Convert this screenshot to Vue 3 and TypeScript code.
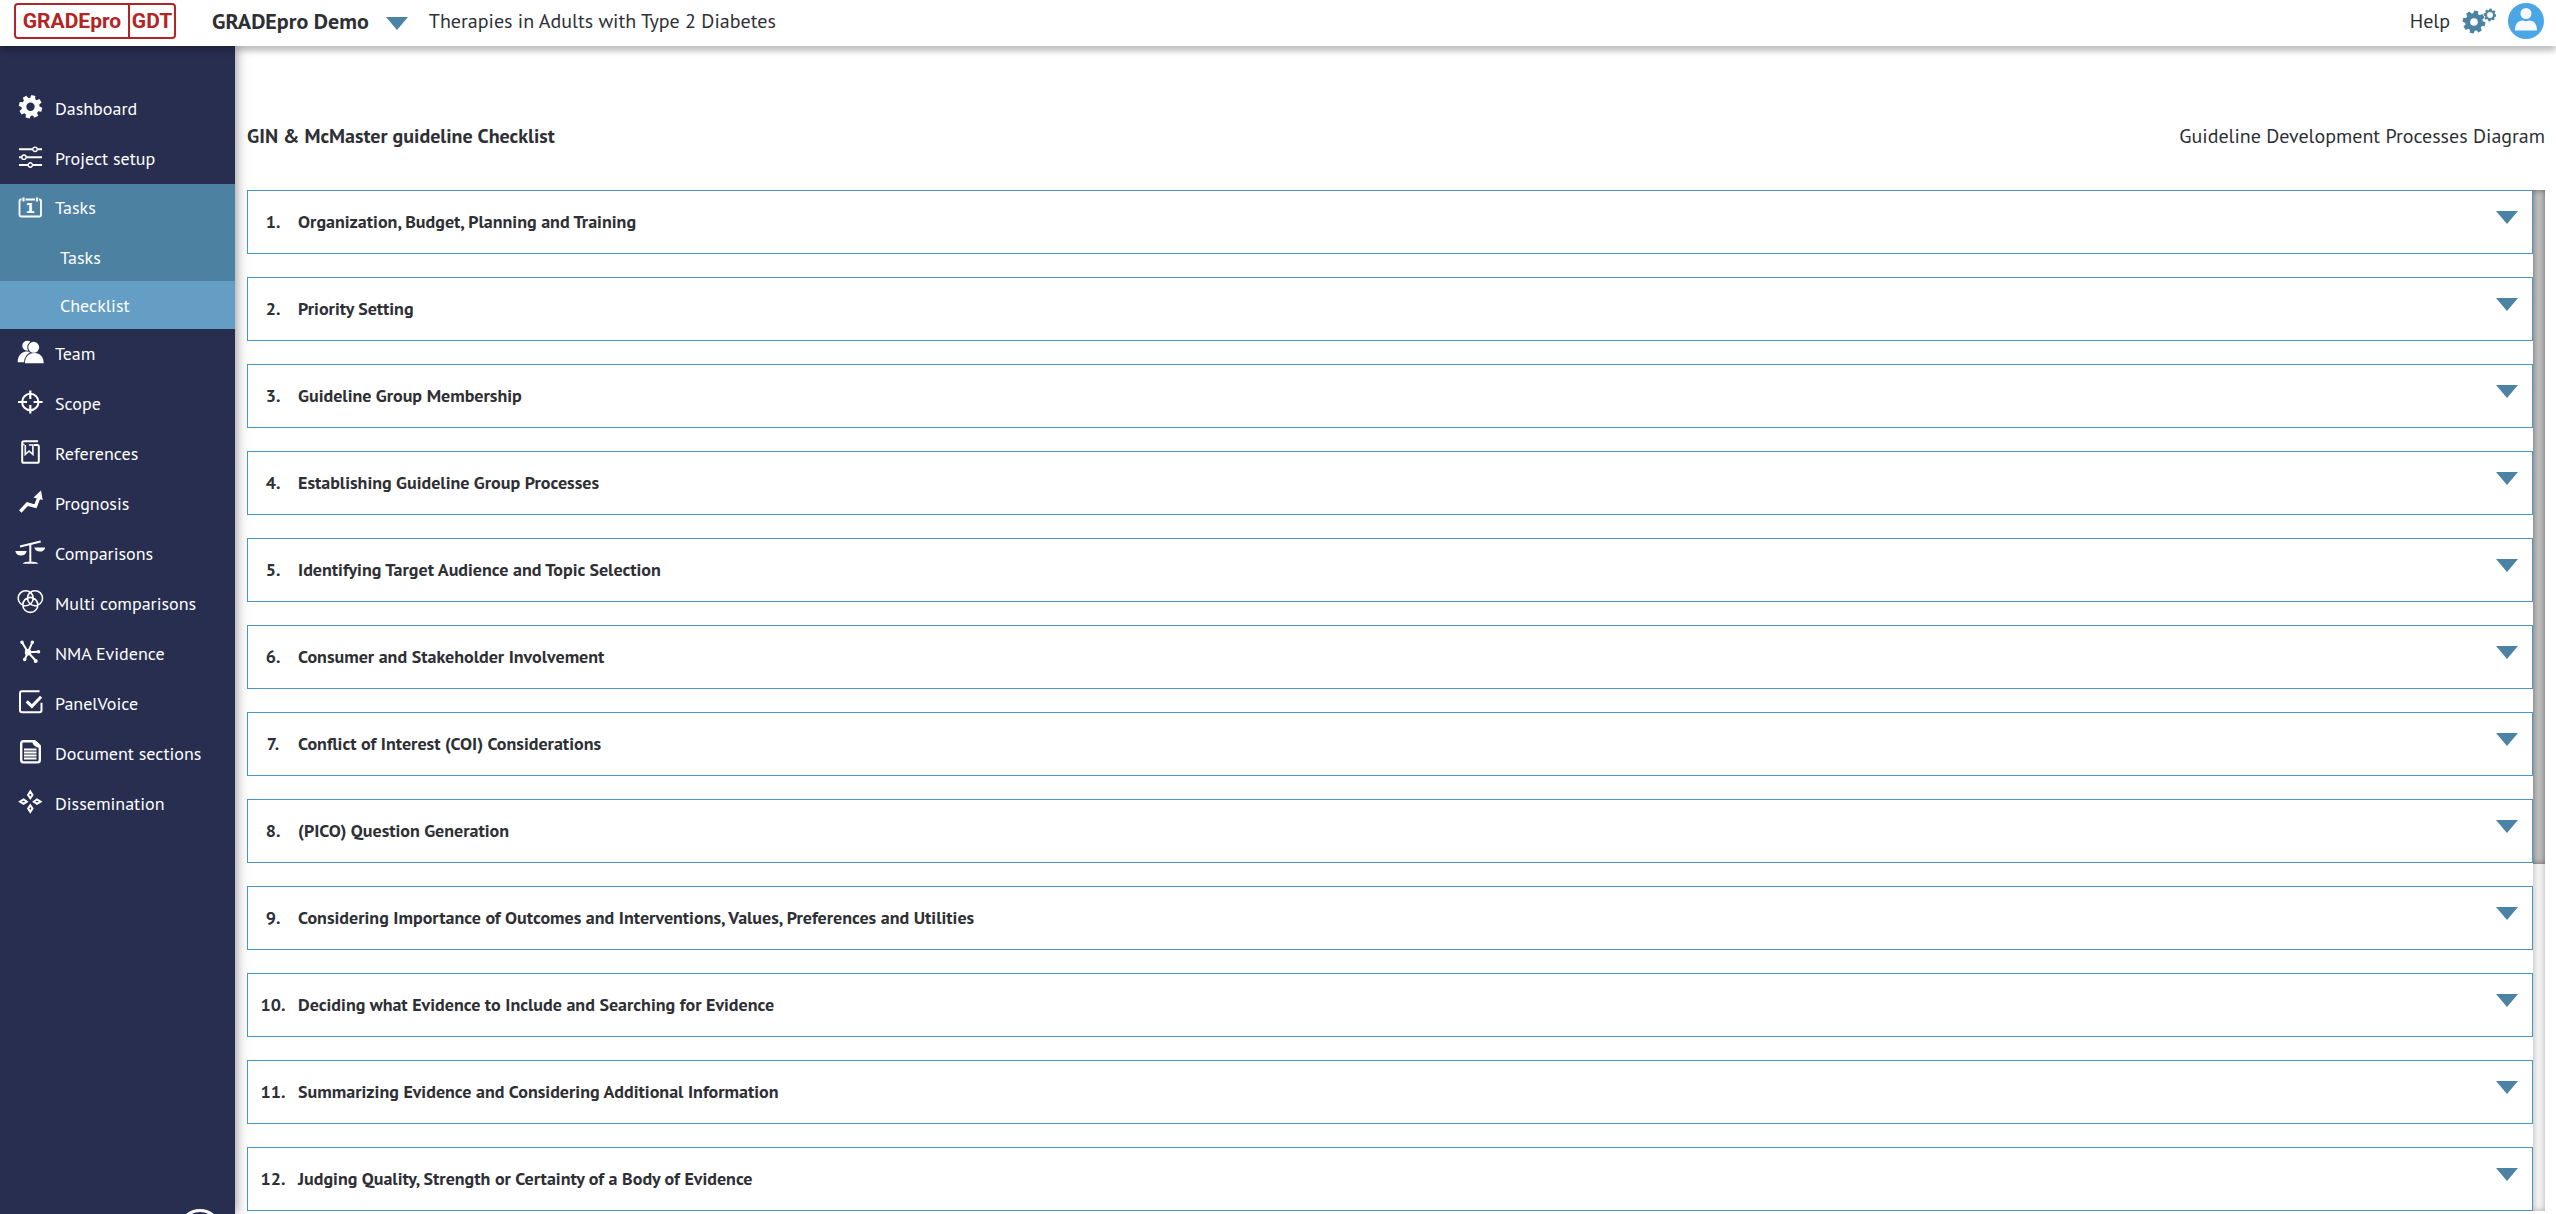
<script setup lang="ts">
import { ref } from 'vue'

interface Shape {
  d: string
  fill?: boolean
  width?: number
  cut?: boolean
}
interface MenuItem {
  label: string
  icon: Shape[]
  glyph?: string
  children?: string[]
}

const circle = (cx: number, cy: number, r: number): string =>
  `M${cx - r} ${cy}a${r} ${r} 0 1 0 ${2 * r} 0a${r} ${r} 0 1 0 ${-2 * r} 0z`

function gear(cx: number, cy: number, outer: number, inner: number, hole: number, turn = 0): string {
  const teeth = 8
  const step = (Math.PI * 2) / teeth
  const at = (r: number, a: number) => `${(cx + r * Math.cos(a)).toFixed(2)} ${(cy + r * Math.sin(a)).toFixed(2)}`
  const points: string[] = []
  for (let i = 0; i < teeth; i++) {
    const a = i * step + turn
    points.push(at(inner, a - step * 0.36), at(outer, a - step * 0.22), at(outer, a + step * 0.22), at(inner, a + step * 0.36))
  }
  return `M${points.join('L')}z${circle(cx, cy, hole)}`
}

const menu: MenuItem[] = [
  { label: 'Dashboard', icon: [{ d: gear(15.5, 12.8, 11.8, 9, 4.2, 0.25), fill: true }] },
  {
    label: 'Project setup',
    icon: [
      { d: 'M4 5.3h14M22.3 5.3h4.7M4 13.2h2.7M11.3 13.2h15.7M4 21h9M17.6 21h9.4', width: 2 },
      { d: circle(20, 5.3, 2.2) + circle(9, 13.2, 2.2) + circle(15.3, 21, 2.2), width: 1.4 },
    ],
  },
  {
    label: 'Tasks',
    glyph: '1',
    icon: [
      { d: 'M6.500 5.500h-.5q-1.500 0-1.500 1.500v14q0 1.500 1.500 1.500h18.500q1.500 0 1.500-1.500v-14q0-1.500-1.500-1.500h-.5M10.500 5.500h9.500', width: 1.8 },
      { d: 'M8.500 3.500v4M22 3.500v4', width: 2.2 },
    ],
    children: ['Tasks', 'Checklist'],
  },
  {
    label: 'Team',
    icon: [
      { d: circle(12.3, 6.8, 5) + 'M2.7 23.2c0-6 3-9.700 8-10.700h5l-5 10.700z', fill: true },
      { d: circle(18.7, 8.3, 5.5) + 'M10 24.300c0-6 3-10.300 9.300-10.300s9.400 4.300 9.400 10.300z', fill: true, cut: true },
    ],
  },
  {
    label: 'Scope',
    icon: [
      { d: circle(15.3, 13, 8.2), width: 2 },
      { d: 'M15.3 1.5v8.500M15.3 16v8.500M3 13h9M18.600 13h9', width: 2.2 },
    ],
  },
  {
    label: 'References',
    icon: [
      { d: 'M23 2.300h-14q-1.800 0-1.800 1.800v18.100q0 1.600 1.600 1.600h13.400q1.600 0 1.600-1.600v-14.600q0-1.600-1.600-1.600h-3.200', width: 2 },
      { d: 'M9.500 5.500h-2M10.300 6v9.500l3.800-3.500 3.800 3.500v-9.500h-4', width: 1.6 },
    ],
  },
  {
    label: 'Prognosis',
    icon: [
      { d: 'M5.300 22.500l7-7.500 8.200 2.300 3.300-8.600', width: 3.4 },
      { d: 'M26 1.500l-7.500 7 9.200 2.500z', fill: true },
    ],
  },
  {
    label: 'Comparisons',
    icon: [
      { d: 'M5 7.500l20.700-5', width: 2.2 },
      { d: 'M15.300 4.500v18.500', width: 2 },
      { d: 'M7.700 24.700q1-2 5-2h5.200q4.400 0 5.400 2zM.3 12h11.400q-1 4.500-5.700 4.500t-5.700-4.500zM19.300 8.500h11q-1 4-5.500 4t-5.500-4z', fill: true },
    ],
  },
  {
    label: 'Multi comparisons',
    icon: [{ d: circle(10.7, 9.2, 7.5) + circle(20, 9.2, 7.5) + circle(15.3, 15.9, 7.5), width: 1.6 }],
  },
  {
    label: 'NMA Evidence',
    icon: [
      { d: 'M13 13.300L7 3.300M13 13.300L17.300 3.300M13 13.300L24 12.700M13 13.300L21 22M13 13.300L9.700 20.500', width: 2 },
      { d: circle(13, 13.3, 3.2), fill: true },
      { d: circle(7, 3.3, 1.8) + circle(17.3, 3.3, 1.8) + circle(23.5, 12.7, 1.8) + circle(20.7, 22, 2) + circle(9.7, 20.5, 1.8), fill: true },
    ],
  },
  {
    label: 'PanelVoice',
    icon: [
      { d: 'M24.500 2.300h-17.500q-2 0-2 2v17q0 2 2 2h17.500q2 0 2-2v-7.500', width: 2 },
      { d: 'M11.700 12.300l5.200 5 9.200-9.500', width: 3 },
    ],
  },
  {
    label: 'Document sections',
    icon: [
      { d: 'M19.500 2.300h-11q-2.300 0-2.300 2.300v16.500q0 2.300 2.300 2.300h14q2.300 0 2.300-2.300v-14z', width: 2.4 },
      { d: 'M17 2q1 6 8 7l-1-4.500-3-2.500z', fill: true },
      { d: 'M9 10.500h12.500M9 13.500h12.500M9 16.500h12.500M9 19.500h12.500', width: 1.8 },
    ],
  },
  {
    label: 'Dissemination',
    icon: [
      { d: 'M15.300 2.500l2.200 3.500-2.200 3.200-2.200-3.200zM15.300 16.200l2.200 3.200-2.200 3.500-2.200-3.500zM5.100 12.700l3.500-2.200 3.200 2.200-3.200 2.200zM25.500 12.700l-3.500-2.200-3.200 2.200 3.200 2.200z', width: 2 },
    ],
  },
]

const sections = ref<string[]>([
  'Organization, Budget, Planning and Training',
  'Priority Setting',
  'Guideline Group Membership',
  'Establishing Guideline Group Processes',
  'Identifying Target Audience and Topic Selection',
  'Consumer and Stakeholder Involvement',
  'Conflict of Interest (COI) Considerations',
  '(PICO) Question Generation',
  'Considering Importance of Outcomes and Interventions, Values, Preferences and Utilities',
  'Deciding what Evidence to Include and Searching for Evidence',
  'Summarizing Evidence and Considering Additional Information',
  'Judging Quality, Strength or Certainty of a Body of Evidence',
])

const current = ref('Checklist')
</script>

<template>
  <div class="app">
    <header class="topbar">
      <a class="logo" href="#"><span class="logo-main">GRADEpro</span><span class="logo-sub">GDT</span></a>
      <button class="workspace" type="button">
        GRADEpro Demo
        <svg class="caret" viewBox="0 0 22 13" aria-hidden="true"><path d="M0 0h22l-11 13z" /></svg>
      </button>
      <span class="project">Therapies in Adults with Type 2 Diabetes</span>
      <div class="tools">
        <a class="help" href="#">Help</a>
        <button class="icon-button" type="button" aria-label="Settings">
          <svg class="gears" viewBox="0 0 34 26" aria-hidden="true">
            <path :d="gear(12, 14, 11.5, 8.8, 3.8, 0.2)" />
            <path :d="gear(28, 7, 6.4, 5, 2.9, 0.1)" />
          </svg>
        </button>
        <button class="icon-button" type="button" aria-label="Account">
          <svg class="avatar" viewBox="0 0 36 36" aria-hidden="true">
            <circle class="avatar-disc" cx="18" cy="18" r="18" />
            <circle class="avatar-body" cx="18" cy="10.5" r="5.5" />
            <path class="avatar-body" d="M7 27.500c0-6 2.500-10 8-10q3 1.500 6 0c5.500 0 8 4 8 10z" />
          </svg>
        </button>
      </div>
    </header>

    <div class="body">
      <nav class="sidebar">
        <ul class="menu">
          <li v-for="item in menu" :key="item.label" :class="{ group: item.children }">
            <a class="menu-link" href="#">
              <svg class="menu-icon" viewBox="0 0 30 30" aria-hidden="true">
                <path
                  v-for="(shape, i) in item.icon"
                  :key="i"
                  :d="shape.d"
                  :class="[shape.fill ? 'solid' : 'line', { cut: shape.cut }]"
                  :stroke-width="shape.width"
                />
                <text v-if="item.glyph" class="glyph" x="15" y="19" text-anchor="middle">{{ item.glyph }}</text>
              </svg>
              {{ item.label }}
            </a>
            <ul v-if="item.children" class="submenu">
              <li v-for="child in item.children" :key="child">
                <a class="submenu-link" :class="{ active: child === current }" href="#" @click.prevent="current = child">{{ child }}</a>
              </li>
            </ul>
          </li>
        </ul>
        <button class="collapse" type="button" aria-label="Collapse menu"></button>
      </nav>

      <main class="content">
        <div class="heading">
          <h1>GIN &amp; McMaster guideline Checklist</h1>
          <a href="#">Guideline Development Processes Diagram</a>
        </div>
        <div class="scroller">
          <ol class="sections">
            <li v-for="(section, i) in sections" :key="section">
              <button class="section" type="button">
                <span class="number">{{ i + 1 }}.</span>
                <span class="name">{{ section }}</span>
                <svg class="caret" viewBox="0 0 22 13" aria-hidden="true"><path d="M0 0h22l-11 13z" /></svg>
              </button>
            </li>
          </ol>
          <div class="track"><div class="thumb"></div></div>
        </div>
      </main>
    </div>
  </div>
</template>

<style>
body {
  overflow: hidden;
}
</style>

<style scoped>
.app {
  display: flex;
  flex-direction: column;
  height: 100vh;
  overflow: hidden;
  background: #fff;
  color: #2e3035;
  font-family: 'PT Sans', Lato, 'Noto Sans', sans-serif;
  font-size: 20px;
}
.app * {
  box-sizing: border-box;
}
a {
  color: inherit;
  text-decoration: none;
}
button {
  padding: 0;
  border: 0;
  background: none;
  color: inherit;
  font: inherit;
  text-align: left;
  cursor: pointer;
}
ul,
ol {
  margin: 0;
  padding: 0;
  list-style: none;
}

.topbar {
  position: relative;
  z-index: 2;
  display: flex;
  flex: none;
  align-items: center;
  height: 46px;
  padding: 0 12px 4px 14px;
  background: #fff;
  box-shadow: 0 5px 6px rgba(0, 0, 0, 0.25);
}
.logo {
  display: flex;
  flex: none;
  width: 162px;
  height: 36px;
  border: 2px solid #b32424;
  border-radius: 4px;
  color: #b32424;
  font: bold 21px/32px Roboto, sans-serif;
}
.logo-main {
  width: 112px;
  text-align: center;
}
.logo-sub {
  flex: 1;
  border-left: 2px solid #b32424;
  text-align: center;
}
.workspace {
  display: flex;
  align-items: center;
  gap: 17px;
  margin-left: 36px;
  font-size: 22px;
  font-weight: 700;
  white-space: nowrap;
}
.caret {
  flex: none;
  width: 22px;
  height: 13px;
  fill: #4c82a4;
}
.workspace .caret {
  margin-top: 4px;
}
.project {
  margin-left: 21px;
}
.tools {
  display: flex;
  align-items: center;
  margin-left: auto;
}
.icon-button {
  display: flex;
}
.gears {
  width: 34px;
  height: 26px;
  margin: 0 12px;
  fill: #4c82a4;
  fill-rule: evenodd;
}
.avatar {
  width: 36px;
  height: 36px;
}
.avatar-disc {
  fill: #4ba6e6;
}
.avatar-body {
  fill: #f7f9ff;
}

.body {
  display: flex;
  flex: 1;
  min-height: 0;
}
.sidebar {
  display: flex;
  flex: none;
  flex-direction: column;
  width: 235px;
  padding-top: 38px;
  background: #282e50;
  box-shadow: 0 0 12px rgba(0, 0, 0, 0.5);
  color: #fff;
  font-size: 18px;
}
.menu-link {
  display: flex;
  align-items: center;
  gap: 10px;
  height: 50px;
  padding: 0 0 2px 15px;
}
.group {
  background: #4d81a2;
}
.group .menu-link {
  height: 49px;
}
.submenu-link {
  display: flex;
  align-items: center;
  height: 48px;
  padding-left: 60px;
}
.submenu-link.active {
  background: #659ec5;
}
.menu-icon {
  flex: none;
  width: 30px;
  height: 30px;
  margin-top: 2px;
}
.solid {
  fill: #fff;
  fill-rule: evenodd;
}
.line {
  fill: none;
  stroke: #fff;
}
.cut {
  stroke: #282e50;
  stroke-width: 2px;
  paint-order: stroke;
}
.glyph {
  fill: #fff;
  font: bold 14px 'DejaVu Sans', sans-serif;
}
.collapse {
  flex: none;
  align-self: flex-end;
  width: 44px;
  height: 44px;
  margin: auto 13px -39px 0;
  border: 3px solid #fff;
  border-radius: 50%;
}

.content {
  flex: 1;
  min-width: 0;
  padding: 0 11px 0 12px;
}
.heading {
  display: flex;
  align-items: center;
  justify-content: space-between;
  height: 144px;
  padding-top: 36px;
}
h1 {
  margin: 0;
  font-size: 20px;
  font-weight: 700;
}
.scroller {
  display: flex;
}
.sections {
  display: flex;
  flex: 1;
  flex-direction: column;
  gap: 23px;
}
.section {
  display: flex;
  align-items: center;
  gap: 12px;
  width: 100%;
  height: 64px;
  padding: 0 14px 2px 12px;
  border: 1px solid #4597c7;
  font-size: 18px;
  font-weight: 700;
}
.number {
  width: 26px;
  text-align: center;
}
.section .caret {
  margin: 0 0 8px auto;
}
.track {
  width: 12px;
  background: #f5f5f5;
  box-shadow: inset 0 0 6px rgba(0, 0, 0, 0.3);
}
.thumb {
  height: 66%;
  background: #c1c1c1;
  box-shadow: inset 0 0 6px rgba(0, 0, 0, 0.5);
}
</style>
